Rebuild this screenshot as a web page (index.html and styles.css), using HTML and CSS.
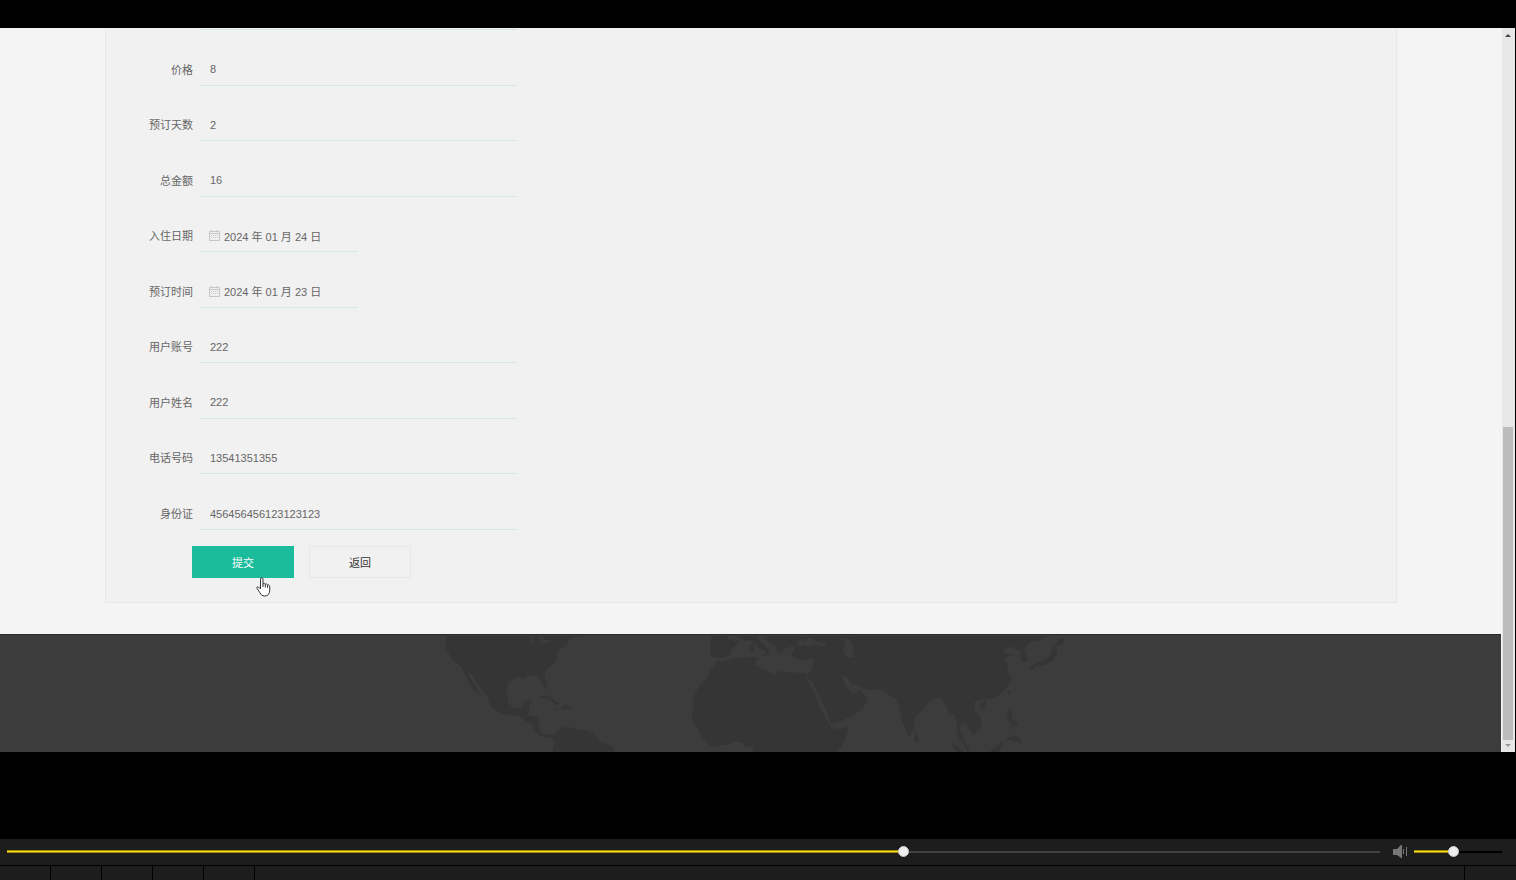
FILE: index.html
```html
<!DOCTYPE html>
<html lang="zh-CN">
<head>
<meta charset="utf-8">
<title>预订</title>
<link rel="stylesheet" href="styles.css">
</head>
<body>
<main class="stage">
  <div class="page">
    <form class="panel">
      <div class="fields">
        <div class="row"><label for="price">价格</label><input class="field" id="price" type="text" value="8"></div>
        <div class="row"><label for="days">预订天数</label><input class="field" id="days" type="text" value="2"></div>
        <div class="row"><label for="total">总金额</label><input class="field" id="total" type="text" value="16"></div>
        <div class="row"><label for="checkin">入住日期</label>
          <div class="date">
            <svg class="calendar" viewBox="0 0 11 11" aria-hidden="true"><path d="M.5 1.5h10v9H.5zM.5 3.5h10M3 0v2M8 0v2"/><path class="dots" d="M2 5.5h7M2 7.5h7"/></svg>
            <input class="field" id="checkin" type="text" value="2024 年 01 月 24 日">
          </div>
        </div>
        <div class="row"><label for="booked">预订时间</label>
          <div class="date">
            <svg class="calendar" viewBox="0 0 11 11" aria-hidden="true"><path d="M.5 1.5h10v9H.5zM.5 3.5h10M3 0v2M8 0v2"/><path class="dots" d="M2 5.5h7M2 7.5h7"/></svg>
            <input class="field" id="booked" type="text" value="2024 年 01 月 23 日">
          </div>
        </div>
        <div class="row"><label for="account">用户账号</label><input class="field" id="account" type="text" value="222"></div>
        <div class="row"><label for="name">用户姓名</label><input class="field" id="name" type="text" value="222"></div>
        <div class="row"><label for="phone">电话号码</label><input class="field" id="phone" type="text" value="13541351355"></div>
        <div class="row"><label for="idcard">身份证</label><input class="field" id="idcard" type="text" value="456456456123123123"></div>
      </div>
      <div class="actions">
        <button class="btn primary" type="button">提交
          <svg class="cursor" viewBox="0 0 15 20" aria-hidden="true"><path d="M4.5 12V2.2C4.5.3 7 .3 7 2.2v5C7 6 9.200 6 9.300 7.500 9.500 6.500 11.500 6.700 11.500 8.300 12 7.500 13.700 8 13.700 9.300v4.200c0 3.200-1.800 5.500-5 5.500-2.500 0-3.700-1.200-4.700-3.200L1 11.300C.3 10 1.800 9.200 2.700 10.200z"/><path d="M7 7v3M9.300 7.500v3M11.500 8.300v2.500"/></svg>
        </button>
        <button class="btn" type="button">返回</button>
      </div>
    </form>
    <footer class="footer">
      <svg class="map" viewBox="430 0 642 118" aria-hidden="true">
        <g transform="translate(430 -14) scale(.33333)">
          <path d="M50 45L47 80 58 100 72 122 96 139 105 162 118 190 132 210 152 225 140 198 118 168 113 153 124 157 142 188 176 234 180 255 212 276 240 284 260 281 286 299 309 311 310 325 328 341 350 352 361 347 371 355 372 374 366 396H553L550 380 530 368 514 366 490 338 472 328 447 327 417 317 408 335 410 316 394 321 378 336 370 343 352 339 340 342 329 329 327 288 295 284 298 259 306 241 300 236 282 240 278 255 265 263 247 260 234 242 231 216 234 187 248 174 269 168 281 173 292 164 320 163 333 176 340 196 350 206 352 188 344 164 346 149 358 139 375 127 382 104 386 88 402 78 414 67 420 52 461 45z"/>
          <path d="M322 232L340 222 361 228 378 242 394 248 379 251 358 235 339 230zM391 261L405 249 430 261 409 266zM364 264l16-3v5zM436 263h16v2z"/>
          <path class="water" d="M303 45L300 72 308 62 310 46zM325 48L335 64 325 73 350 67 365 58 345 58 335 46z"/>
        </g>
        <g transform="translate(680 -14) scale(.33333)">
          <path d="M92 59L118 52 148 54 158 58 178 62 155 84 150 103 132 109 110 112 91 105zM92 45H145L140 58H96z"/>
          <path d="M110 118L130 124 158 112 222 108 232 112 226 130 240 142 265 150 285 164 298 149 318 154 352 155 380 157 379 173 398 205 418 255 440 294 457 325 508 317 498 348 480 383 467 396H222L216 379 195 377 184 363 162 363 145 372 121 372 99 378 77 364 60 340 54 325 41 309 35 290 41 270 36 238 53 203 70 180 83 172 88 148 106 132z"/>
          <path d="M174 45L194 61 211 58 225 66 235 80 255 91 262 99 268 84 255 75 240 60 232 45zM211 72l10-8-1 30-8-4zM244 99l20 1-5 8z"/>
          <path d="M250 45L268 65 287 74 290 92 305 105 312 84 340 74 343 85 334 96 338 108 360 118 382 115 398 112 400 126 394 151 383 160 384 174 398 185 420 230 435 260 444 285 455 310 510 289 535 274 551 259 566 231 548 218 541 204 529 215 514 216 499 197 485 166 496 164 515 189 536 193 550 203 567 207 607 206 627 222 650 235 656 261 666 300 686 349 699 329 705 289 728 268 750 240 783 227 800 258 808 283 823 277 829 300 833 345 850 365 863 396 868 388 848 350 838 326 845 306 862 313 880 341 900 326 906 306 900 288 885 268 882 244 901 236 926 234 955 224 981 200 994 167 980 149 986 130 971 118 998 101 965 94 989 76 1005 84 1020 91 1023 124 1042 123 1040 105 1032 87 1050 62 1080 58 1102 45z"/>
          <path d="M1118 75L1131 68 1142 51 1157 58 1145 70 1129 75 1132 95 1118 121 1090 133 1067 136 1054 151 1049 141 1066 125 1091 120 1108 105zM900 247l19-9-5 22-13 3zM982 207l10 4-6 18zM706 331l11 25-8 12-6-15zM810 367l20 9 21 20h-16zM925 396l43-37-5 23-9 14zM984 262l12 4-2 28 20 12-8 12-24-19zM1010 344l14 10-3 12-30-9-20 2 25-13zM994 306l6 20-9-4z"/>
          <path class="water" d="M348 73L360 54 376 62 385 52 395 50 405 61 438 66 434 76 408 71 380 74zM482 50L496 66 490 84 496 106 516 112 524 104 515 92 522 74 506 54zM680 64l20-1-16 5zM838 107h10v4z"/>
        </g>
      </svg>
    </footer>
  </div>
  <div class="scrollbar" aria-hidden="true"><i class="arrow up"></i><i class="handle"></i><i class="arrow down"></i></div>
</main>
<section class="player">
  <div class="controls">
    <input class="slider seek" type="range" aria-label="播放进度" min="0" max="1000" value="654" style="--played:65.3%">
    <svg class="speaker" viewBox="0 0 14 13" aria-hidden="true"><path d="M0 4h4l4-4h1v13H8L4 10H0z"/><path d="M10 4h1v5h-1zM13 2h1v9h-1z"/></svg>
    <input class="slider volume" type="range" aria-label="音量" min="0" max="1000" value="442" style="--played:44%">
  </div>
  <div class="strip"><i></i><i></i><i></i><i></i><i></i><i class="wide"></i><i class="last"></i></div>
</section>
</body>
</html>
```
FILE: styles.css
```css
* { box-sizing: border-box; }
body {
  margin: 0;
  padding-top: 28px;
  min-height: 100vh;
  display: flex;
  flex-direction: column;
  justify-content: space-between;
  background: #000;
  color: #666;
  font: 11px/16px "Liberation Sans", "Noto Sans CJK SC", sans-serif;
}
input, button { font: inherit; color: inherit; }
.stage { display: flex; padding-right: 1px; }
.page { flex: 1; background: #f4f4f4; }
.panel {
  margin: 0 104px 31px 105px;
  padding: 1px 0 24px 43px;
  background: #f1f1f1;
  border: 1px solid #e6e8e8;
  border-top: 0;
}
.fields {
  display: grid;
  grid-template-rows: repeat(9, 1fr);
  height: 501px;
  border-top: 1px solid transparent;
  background: linear-gradient(#d5e9e4, #d5e9e4) 51px 0 / 317px 1px no-repeat;
  background-origin: border-box;
}
.row {
  display: grid;
  grid-template-columns: 44px 317px;
  gap: 7px;
  align-items: end;
}
.row label { text-align: right; white-space: nowrap; padding-bottom: 8px; }
.field {
  width: 100%;
  height: 32px;
  padding: 0 10px;
  background: transparent;
  border: 0;
  border-bottom: 1px solid #d5e9e4;
  outline: 0;
}
.date { position: relative; width: 158px; height: 32px; }
.date .field { padding: 0 0 0 24px; }
.calendar {
  position: absolute;
  left: 9px;
  top: 10px;
  width: 11px;
  height: 11px;
  fill: none;
  stroke: #c3c7c7;
}
.calendar .dots { stroke-dasharray: 1 1; }
.actions { display: flex; gap: 15px; padding: 16px 0 0 43px; }
.btn {
  position: relative;
  width: 102px;
  height: 32px;
  padding: 1px 0 0;
  border: 1px solid #e6e8e8;
  background: #f1f1f1;
  color: #333;
}
.btn.primary { background: #1abc9c; border-color: #1abc9c; color: #fff; }
.cursor {
  position: absolute;
  left: 63px;
  top: 30px;
  width: 15px;
  height: 20px;
  fill: #fff;
  stroke: #333;
}
.footer {
  display: flex;
  justify-content: center;
  height: 118px;
  overflow: hidden;
  background: #3c3c3c;
  border-top: 1px solid #262a28;
}
.map { flex: none; width: 642px; height: 118px; fill: #353535; }
.map .water { fill: #3c3c3c; }
.scrollbar {
  display: flex;
  flex-direction: column;
  align-items: center;
  width: 14px;
  padding: 6px 2px 5px 0;
  background: #e7e7e7;
  border-left: 1px solid #f4f4f4;
}
.arrow { border: 3px solid transparent; }
.arrow.up { border-top: 0; border-bottom-color: #444; }
.arrow.down { border-bottom: 0; border-top-color: #999; margin-top: 4px; }
.handle { width: 10px; height: 313px; margin-top: auto; background: #bcbcbc; }
.player { background: #1d1d1d; }
.controls {
  display: flex;
  align-items: center;
  height: 27px;
  padding: 0 14px 1px 7px;
  border-bottom: 1px solid #000;
}
.slider {
  appearance: none;
  height: 11px;
  margin: 0;
  background: transparent;
}
.seek { --rest: #414141; flex: 1; margin-right: 13px; }
.volume { --rest: #000; width: 88px; margin-left: 7px; }
.slider::-webkit-slider-runnable-track {
  height: 11px;
  background:
    linear-gradient(#f5dc14, #f5dc14) 0 5px / var(--played) 1px no-repeat,
    linear-gradient(#a28e0c, #a28e0c) 0 4px / var(--played) 3px no-repeat,
    linear-gradient(var(--rest), var(--rest)) 0 5px / 100% 2px no-repeat;
}
.slider::-webkit-slider-thumb {
  appearance: none;
  width: 11px;
  height: 11px;
  border: 1px solid #c8c8c8;
  border-radius: 50%;
  background: #eee;
}
.speaker { width: 14px; height: 13px; fill: #777; }
.strip { display: flex; height: 14px; }
.strip i { width: 51px; border-right: 1px solid #000; }
.strip .wide { flex: 1; }
.strip .last { border: 0; }
```
